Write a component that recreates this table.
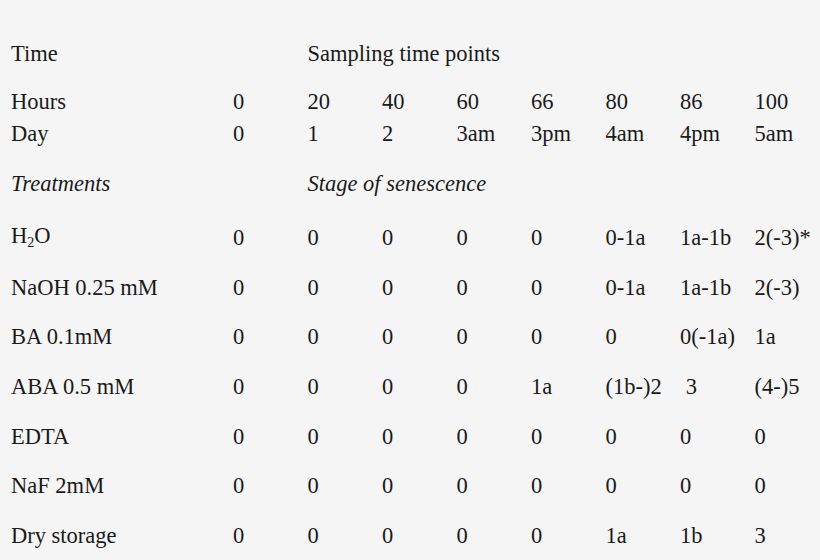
import React from "react";

const cols = "grid grid-cols-[222px_74.5px_74.5px_74.5px_74.5px_74.5px_74.5px_74.5px_74.5px]";

const rows = [
  [<span key="h">H<span className="text-[14px] relative top-[4px]">2</span>O</span>, "0", "0", "0", "0", "0", "0-1a", "1a-1b", "2(-3)*"],
  ["NaOH 0.25 mM", "0", "0", "0", "0", "0", "0-1a", "1a-1b", "2(-3)"],
  ["BA 0.1mM", "0", "0", "0", "0", "0", "0", "0(-1a)", "1a"],
  ["ABA 0.5 mM", "0", "0", "0", "0", "1a", "(1b-)2", "\u00a03", "(4-)5"],
  ["EDTA", "0", "0", "0", "0", "0", "0", "0", "0"],
  ["NaF 2mM", "0", "0", "0", "0", "0", "0", "0", "0"],
  ["Dry storage", "0", "0", "0", "0", "0", "1a", "1b", "3"],
];

function Row({ cells, className = "" }) {
  return (
    <div className={`${cols} items-center ${className}`}>
      {cells.map((c, i) => (
        <div key={i} className="whitespace-nowrap">{c}</div>
      ))}
    </div>
  );
}

export default function App() {
  return (
    <div
      className="w-[820px] h-[560px] bg-[#f5f5f5] text-[#1a1a1a] text-[22.5px] leading-[32px] pl-[11px] pt-[38px] overflow-hidden"
      style={{ fontFamily: '"Liberation Serif", "Times New Roman", serif' }}
    >
      <div className={`${cols} h-[32px] items-center`}>
        <div>Time</div>
        <div />
        <div className="col-span-7">Sampling time points</div>
      </div>
      <Row className="h-[32px] mt-[16px]" cells={["Hours", "0", "20", "40", "60", "66", "80", "86", "100"]} />
      <Row className="h-[32px]" cells={["Day", "0", "1", "2", "3am", "3pm", "4am", "4pm", "5am"]} />
      <div className={`${cols} h-[32px] mt-[18px] items-center italic`}>
        <div>Treatments</div>
        <div />
        <div className="col-span-7">Stage of senescence</div>
      </div>
      <div className="mt-[13px]">
        {rows.map((r, i) => (
          <Row key={i} className="h-[49.7px]" cells={r} />
        ))}
      </div>
    </div>
  );
}
